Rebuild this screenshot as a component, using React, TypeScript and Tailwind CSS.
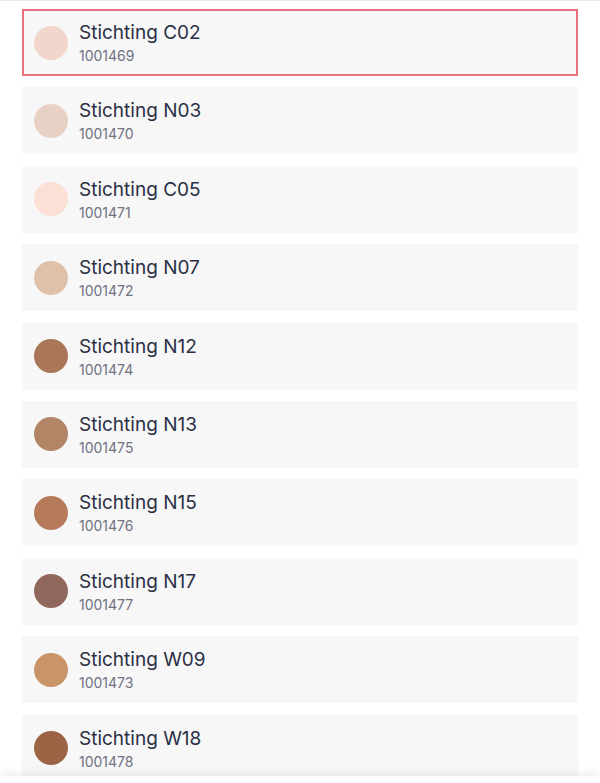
const shades = [
  { name: 'Stichting C02', code: '1001469', color: '#f2d5cb' },
  { name: 'Stichting N03', code: '1001470', color: '#e8d0c4' },
  { name: 'Stichting C05', code: '1001471', color: '#fde0d5' },
  { name: 'Stichting N07', code: '1001472', color: '#dfc1aa' },
  { name: 'Stichting N12', code: '1001474', color: '#a97659' },
  { name: 'Stichting N13', code: '1001475', color: '#b38567' },
  { name: 'Stichting N15', code: '1001476', color: '#b67b5b' },
  { name: 'Stichting N17', code: '1001477', color: '#92675b' },
  { name: 'Stichting W09', code: '1001473', color: '#c99468' },
  { name: 'Stichting W18', code: '1001478', color: '#9b6445' },
]

export default function App() {
  const selected = '1001469'

  return (
    <div className="relative h-[783px] overflow-hidden border-t border-[#ececec] bg-white font-['Inter',sans-serif]">
      <div className="flex flex-col gap-[11.4px] px-[22px] pt-[8px]">
        {shades.map((s) => (
          <div
            key={s.code}
            className={
              s.code === selected
                ? 'flex h-[67px] items-center gap-[11px] border-2 border-[#e9707c] bg-[#f7f7f7] pl-[10px]'
                : 'flex h-[67px] items-center gap-[11px] bg-[#f7f7f7] pl-[12px]'
            }
          >
            <div
              className="h-[34px] w-[34px] shrink-0 rounded-full"
              style={{ backgroundColor: s.color }}
            />
            <div className="flex flex-col">
              <span className="text-[19px] leading-[23px] text-[#2b2f45]">{s.name}</span>
              <span className="mt-[3px] text-[14px] leading-[17px] text-[#6f7281]">{s.code}</span>
            </div>
          </div>
        ))}
      </div>
      <div className="absolute inset-x-0 bottom-0 h-[7px] bg-white shadow-[0_-3px_8px_rgba(0,0,0,0.08)]" />
    </div>
  )
}
